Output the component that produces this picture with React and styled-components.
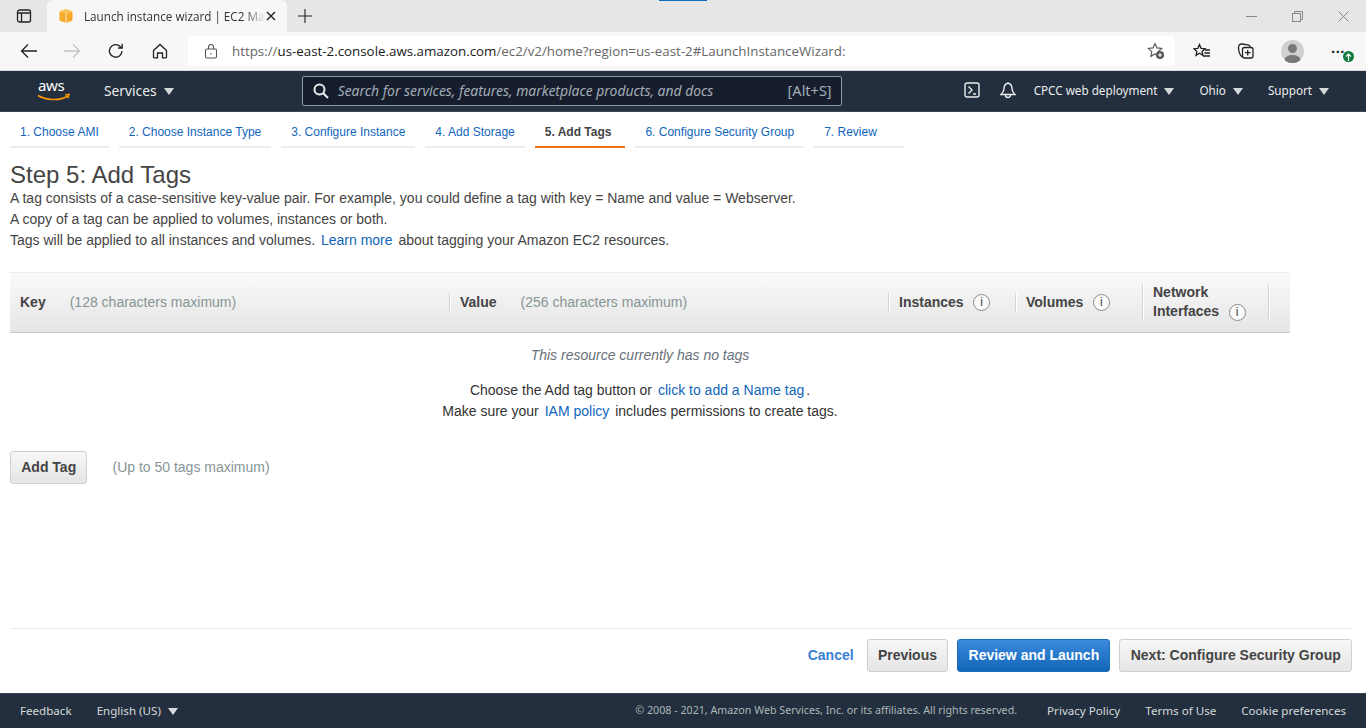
import React from "react";
import styled, { createGlobalStyle } from "styled-components";

const GlobalStyle = createGlobalStyle`
  html, body {
    margin: 0;
    padding: 0;
    background: #fff;
  }
  * {
    box-sizing: border-box;
  }
`;

const Page = styled.div`
  display: flex;
  flex-direction: column;
  width: 1366px;
  height: 728px;
  overflow: hidden;
  font-family: "Liberation Sans", Arial, sans-serif;
  color: #444;
`;

const TabStrip = styled.div`
  display: flex;
  align-items: flex-end;
  height: 32px;
  flex: none;
  background: #e6e6e6;
  position: relative;
`;

const TabToggle = styled.div`
  display: flex;
  align-items: center;
  justify-content: center;
  width: 47px;
  height: 32px;
  svg {
    display: block;
  }
`;

const ActiveTab = styled.div`
  display: flex;
  align-items: center;
  width: 240px;
  height: 32px;
  padding: 0 11px 1px 11px;
  background: #f7f7f7;
  border-radius: 6px 6px 0 0;
`;

const TabTitle = styled.span`
  flex: 1;
  margin-left: 10px;
  white-space: nowrap;
  font-family: "Open Sans", sans-serif;
  font-size: 11.7px;
  color: #333;
  mask-image: linear-gradient(to right, #000 88%, transparent 100%);
`;

const NewTab = styled.div`
  display: flex;
  align-items: center;
  justify-content: center;
  width: 36px;
  height: 32px;
`;

const Progress = styled.div`
  position: absolute;
  top: 0;
  left: 659px;
  width: 48px;
  height: 1px;
  background: #0a6cc4;
`;

const WindowControls = styled.div`
  display: flex;
  align-items: center;
  gap: 35px;
  margin-left: auto;
  height: 32px;
  padding-right: 17px;
`;

const Toolbar = styled.div`
  display: flex;
  align-items: center;
  height: 39px;
  flex: none;
  padding-left: 10px;
  background: #f7f7f7;
  border-bottom: 1px solid #d9d9d9;
`;

const ToolIcon = styled.div`
  display: flex;
  align-items: center;
  justify-content: center;
  flex: none;
  width: ${(p) => p.$w || 44}px;
  height: 30px;
  position: relative;
`;

const AddressBar = styled.div`
  display: flex;
  align-items: center;
  width: 987px;
  height: 30px;
  margin-left: 3px;
  margin-right: 5px;
  padding: 0 10px 0 16px;
  background: #fff;
  border-radius: 4px;
  font-family: "Open Sans", sans-serif;
  font-size: 13.33px;
`;

const Url = styled.span`
  flex: 1;
  margin-left: 14px;
  white-space: nowrap;
  color: #666;
  b {
    font-weight: 400;
    color: #1a1a1a;
  }
`;

const Avatar = styled.div`
  width: 23px;
  height: 23px;
  border-radius: 50%;
  overflow: hidden;
`;

const Dots = styled.span`
  font-family: "Liberation Sans", sans-serif;
  font-size: 15px;
  font-weight: 700;
  letter-spacing: 0.5px;
  color: #222;
  line-height: 1;
  margin-top: -8px;
`;

const UpdateBadge = styled.div`
  position: absolute;
  right: 6px;
  top: 15px;
  display: flex;
  align-items: center;
  justify-content: center;
  width: 11px;
  height: 11px;
  border-radius: 50%;
  background: #0f7b3c;
`;

const ConsoleNav = styled.nav`
  display: flex;
  align-items: center;
  height: 41px;
  flex: none;
  padding-left: 37px;
  background: #232f3e;
  border-bottom: 1px solid #3b4654;
  font-family: "Noto Sans", sans-serif;
  font-size: 13px;
  color: #eaeded;
`;

const NavItem = styled.div`
  display: flex;
  align-items: center;
  gap: ${(p) => p.$gap || 7}px;
  margin-left: ${(p) => p.$ml || 0}px;
  padding-bottom: 2px;
  white-space: nowrap;
  font-size: ${(p) => p.$size || 11.7}px;
`;

const Caret = styled.span`
  display: inline-block;
  width: 0;
  height: 0;
  margin-top: 2px;
  border-left: ${(p) => p.$s || 5}px solid transparent;
  border-right: ${(p) => p.$s || 5}px solid transparent;
  border-top: ${(p) => (p.$s || 5) + 2}px solid #d5dbdb;
`;

const SearchBox = styled.div`
  display: flex;
  align-items: center;
  width: 540px;
  height: 30px;
  margin-left: 128px;
  padding: 0 9px 0 10px;
  background: #161e2d;
  border: 1px solid #8d99a8;
  border-radius: 2px;
`;

const SearchHint = styled.span`
  flex: 1;
  margin-left: 9px;
  padding-bottom: 2px;
  font-style: italic;
  font-size: 13.9px;
  color: #a3acb6;
  white-space: nowrap;
`;

const Shortcut = styled.span`
  padding-bottom: 2px;
  font-size: 14.5px;
  color: #a3acb6;
`;

const Main = styled.main`
  flex: 1;
  display: flex;
  flex-direction: column;
  min-height: 0;
  padding: 0 14px 0 10px;
`;

const WizardTabs = styled.ul`
  display: flex;
  gap: 10px;
  margin: 0;
  padding: 0;
  list-style: none;
  height: 36px;
  flex: none;
`;

const WizardTab = styled.li`
  display: flex;
  align-items: center;
  height: 36px;
  padding: 5px ${(p) => p.$pr || 10}px 0 10px;
  font-size: 12px;
  white-space: nowrap;
  color: ${(p) => (p.$active ? "#444" : "#1166bb")};
  font-weight: ${(p) => (p.$active ? 700 : 400)};
  border-bottom: 2px solid ${(p) => (p.$active ? "#ec7211" : "#eaeded")};
`;

const Title = styled.h1`
  margin: 14px 0 0;
  font-size: 24px;
  line-height: 26px;
  font-weight: 400;
  color: #444;
`;

const Intro = styled.p`
  margin: 0;
  font-size: 14px;
  line-height: 21px;
  color: #444;
`;

const Link = styled.span`
  color: #1166bb;
  margin: 0 2px;
`;

const TableHead = styled.div`
  display: grid;
  grid-template-columns: 439px 439px 127px 127px 126px 22px;
  align-items: center;
  width: 1280px;
  height: 61px;
  margin-top: 21px;
  background: linear-gradient(#fafafa, #e5e5e5);
  border-top: 1px solid #eaeded;
  border-bottom: 1px solid #c8cccc;
  font-size: 14px;
`;

const HeadCell = styled.div`
  display: flex;
  align-items: center;
  height: ${(p) => (p.$tall ? 38 : 19)}px;
  margin-top: ${(p) => (p.$tall ? 0 : -1)}px;
  padding-left: 10px;
  border-left: ${(p) => (p.$first ? "none" : "1px solid #d5d5d5")};
  box-shadow: ${(p) => (p.$first ? "none" : "inset 1px 0 0 #fff")};
  b {
    color: #444;
    white-space: nowrap;
  }
`;

const Hint = styled.span`
  margin-left: ${(p) => p.$ml || 24}px;
  font-size: 14px;
  color: #879596;
  white-space: nowrap;
`;

const TagLimit = styled(Hint)`
  padding-bottom: 2px;
`;

const InfoCircle = styled.span`
  display: inline-flex;
  align-items: center;
  justify-content: center;
  flex: none;
  vertical-align: ${(p) => (p.$inline ? "middle" : "baseline")};
  width: 17px;
  height: 17px;
  margin-left: ${(p) => p.$ml || 9.5}px;
  border: 1px solid #8a8a8a;
  border-radius: 50%;
  background: #fafafa;
  font-size: 12px;
  font-weight: 400;
  line-height: 1;
  color: #444;
`;

const NetworkLabel = styled.div`
  font-weight: 700;
  line-height: 19px;
  color: #444;
  margin-top: -1px;
  white-space: nowrap;
`;

const EmptyState = styled.div`
  width: 1260px;
  margin-top: 12px;
  text-align: center;
  font-size: 14px;
  line-height: 21px;
  color: #333;
`;

const EmptyTitle = styled.div`
  font-style: italic;
  color: #687078;
  margin-bottom: 14px;
`;

const AddRow = styled.div`
  display: flex;
  align-items: center;
  margin-top: 29px;
`;

const Button = styled.button`
  display: block;
  height: 33px;
  padding: 0 10.25px 2px;
  font-family: "Liberation Sans", Arial, sans-serif;
  font-size: 14px;
  font-weight: 700;
  white-space: nowrap;
  border-radius: 3px;
  border: 1px solid ${(p) => (p.$primary ? "#1a6fb8" : "#cfcfcf")};
  color: ${(p) => (p.$primary ? "#fff" : "#444")};
  background: ${(p) =>
    p.$primary
      ? "linear-gradient(#3b8ade, #1266b8)"
      : "linear-gradient(#f7f7f7, #e5e5e5)"};
`;

const Spacer = styled.div`
  flex: 1;
`;

const ActionBar = styled.div`
  display: flex;
  align-items: center;
  justify-content: flex-end;
  gap: 9px;
  height: 65px;
  flex: none;
  padding: 0 0 11px;
  border-top: 1px solid #eaeded;
`;

const CancelLink = styled.span`
  margin-right: 4px;
  padding-bottom: 2px;
  font-size: 14px;
  font-weight: 700;
  color: #3b7fd4;
`;

const Footer = styled.footer`
  display: flex;
  align-items: center;
  height: 35px;
  flex: none;
  padding: 0 20px 2px;
  background: #232f3e;
  border-top: 1px solid #3b4654;
  font-family: "Noto Sans", sans-serif;
  font-size: 11.6px;
  color: #d5dbdb;
`;

const Copyright = styled.span`
  margin-left: auto;
  margin-right: 30px;
  font-size: 10.7px;
  color: #aab7b8;
`;

const FooterLink = styled.span`
  margin-left: ${(p) => p.$ml || 0}px;
  white-space: nowrap;
`;

const wizardSteps = [
  { label: "1. Choose AMI" },
  { label: "2. Choose Instance Type" },
  { label: "3. Configure Instance" },
  { label: "4. Add Storage" },
  { label: "5. Add Tags", active: true, pr: 14 },
  { label: "6. Configure Security Group" },
  { label: "7. Review", pr: 27 },
];

const Stroke = ({ w = 16, h = 16, sw = 1.3, color = "#222", children }) => (
  <svg width={w} height={h} viewBox={`0 0 ${w} ${h}`} fill="none" stroke={color} strokeWidth={sw}>
    {children}
  </svg>
);

const AwsLogo = () => (
  <svg width="34" height="34" viewBox="0 0 34 34" fill="none">
    <text x="1" y="17" fontFamily="Noto Sans, sans-serif" fontSize="15" fill="#fff" letterSpacing="-0.4">
      aws
    </text>
    <path d="M1 21.500C9 26.500 23 27 31 22" stroke="#ff9900" strokeWidth="1.6" />
    <path d="M28 21l4-.6-1 3.800" stroke="#ff9900" strokeWidth="1.4" />
  </svg>
);

const CubeIcon = () => (
  <svg width="16" height="16" viewBox="0 0 16 16">
    <path d="M8 1l6.500 2.500v9L8 15l-6.500-2.500v-9z" fill="#f7a928" />
    <path d="M8 1l6.500 2.500L8 6 1.500 3.500z" fill="#fbc65f" />
    <path d="M8 6v9" stroke="#fff" strokeWidth="0.8" />
  </svg>
);

export default function App() {
  return (
    <Page>
      <GlobalStyle />
      <TabStrip>
        <Progress />
        <TabToggle>
          <Stroke w={16} h={16}>
            <rect x="1.5" y="2" width="13" height="12" rx="2" />
            <path d="M1.5 5h13M5.500 5v9" />
          </Stroke>
        </TabToggle>
        <ActiveTab>
          <CubeIcon />
          <TabTitle>Launch instance wizard | EC2 Ma</TabTitle>
          <Stroke w={10} h={10} sw={1.4}>
            <path d="M1 1l8 8M9 1l-8 8" />
          </Stroke>
        </ActiveTab>
        <NewTab>
          <Stroke w={16} h={16} sw={1.1}>
            <path d="M8 1v14M1 8h14" />
          </Stroke>
        </NewTab>
        <WindowControls>
          <Stroke w={11} h={11} sw={1} color="#888">
            <path d="M0 5.500h11" />
          </Stroke>
          <Stroke w={11} h={11} sw={1} color="#888">
            <rect x="0.5" y="2.500" width="8" height="8" />
            <path d="M2.500 2.500v-2h8v8h-2" />
          </Stroke>
          <Stroke w={11} h={11} sw={1} color="#888">
            <path d="M0.5 0.5l10 10M10.500 0.5l-10 10" />
          </Stroke>
        </WindowControls>
      </TabStrip>

      <Toolbar>
        <ToolIcon $w={37}>
          <Stroke w={18} h={16}>
            <path d="M17 8H1.500M8 1.500L1.500 8 8 14.500" />
          </Stroke>
        </ToolIcon>
        <ToolIcon $w={50}>
          <Stroke w={18} h={16} color="#c4c4c4">
            <path d="M1 8h15.500M10 1.500L16.500 8 10 14.500" />
          </Stroke>
        </ToolIcon>
        <ToolIcon $w={38}>
          <Stroke w={18} h={18}>
            <path d="M15 9a6.300 6.300 0 1 1-2-4.700L15 6" />
            <path d="M15.200 1.800V6h-4.200" />
          </Stroke>
        </ToolIcon>
        <ToolIcon $w={50}>
          <Stroke w={16} h={16}>
            <path d="M1.500 7.500L8 1.500l6.500 6V14a.8.8 0 0 1-.8.8H10.500V10h-5v4.800H2.300a.8.8 0 0 1-.8-.8z" />
          </Stroke>
        </ToolIcon>
        <AddressBar>
          <Stroke w={14} h={16} sw={1.1} color="#555">
            <rect x="1.5" y="6" width="11" height="9" rx="1.5" />
            <path d="M4.500 6V4a2.500 2.500 0 0 1 5 0v2M7 10v1.500" />
          </Stroke>
          <Url>
            https://<b>us-east-2.console.aws.amazon.com</b>/ec2/v2/home?region=us-east-2#LaunchInstanceWizard:
          </Url>
          <Stroke w={18} h={18} sw={1.1} color="#555">
            <path d="M8 1.500l2 4.400 4.700.5-3.500 3.200 1 4.700L8 11.900 3.800 14.300l1-4.700L1.300 6.400 6 5.900z" />
            <circle cx="13" cy="13" r="4" fill="#555" stroke="none" />
            <path d="M13 11v4M11 13h4" stroke="#fff" />
          </Stroke>
        </AddressBar>
        <ToolIcon $w={44}>
          <Stroke w={18} h={16}>
            <path d="M6.500 1.500l1.600 3.800 4 .4-3 2.700.9 4L6.500 10.300 3 12.400l.9-4-3-2.700 4-.4z" />
            <path d="M12 7h5M11.500 10h5.500M10 13h7" />
          </Stroke>
        </ToolIcon>
        <ToolIcon $w={44}>
          <Stroke w={18} h={18}>
            <path d="M5 15C3 13 1.500 9 1.500 5.500 1.500 3 3 1.800 5 2l6 .8c1.500.2 2 1 2.200 2.200" />
            <rect x="5.5" y="5.5" width="10.5" height="10.5" rx="2" />
            <path d="M10.700 8v5.500M8 10.700h5.500" />
          </Stroke>
        </ToolIcon>
        <ToolIcon $w={48}>
          <Avatar>
            <svg width="23" height="23" viewBox="0 0 23 23">
              <rect width="23" height="23" fill="#d2d0ce" />
              <circle cx="11.5" cy="8.5" r="4.5" fill="#7a7876" />
              <ellipse cx="11.5" cy="20" rx="8" ry="5" fill="#7a7876" />
            </svg>
          </Avatar>
        </ToolIcon>
        <ToolIcon $w={44}>
          <Dots>...</Dots>
          <UpdateBadge>
            <svg width="7" height="8" viewBox="0 0 7 8" fill="none" stroke="#fff" strokeWidth="1.2">
              <path d="M3.500 8V1M1 3.500L3.500 1 6 3.500" />
            </svg>
          </UpdateBadge>
        </ToolIcon>
      </Toolbar>

      <ConsoleNav>
        <AwsLogo />
        <NavItem $ml={33} $size={13.8} $gap={7}>
          Services <Caret $s={5.5} />
        </NavItem>
        <SearchBox>
          <svg width="16" height="16" viewBox="0 0 16 16" fill="none" stroke="#eaeded" strokeWidth="2">
            <circle cx="6.5" cy="6.5" r="5" />
            <path d="M10.200 10.200L15 15" />
          </svg>
          <SearchHint>Search for services, features, marketplace products, and docs</SearchHint>
          <Shortcut>[Alt+S]</Shortcut>
        </SearchBox>
        <NavItem $ml={122}>
          <svg width="16" height="16" viewBox="0 0 16 16" fill="none" stroke="#eaeded" strokeWidth="1.4">
            <rect x="1" y="1" width="14" height="14" rx="2" />
            <path d="M4.500 4.500L8 8l-3.500 3.500M9 12h3" />
          </svg>
        </NavItem>
        <NavItem $ml={20}>
          <svg width="16" height="17" viewBox="0 0 16 17" fill="none" stroke="#eaeded" strokeWidth="1.4">
            <path d="M8 1c-3 1-4 3-4 5.500 0 3-1.500 4-3 6h14c-1.500-2-3-3-3-6C12 4 11 2 8 1z" />
            <path d="M5.500 13a2.500 2.500 0 0 0 5 0" />
          </svg>
        </NavItem>
        <NavItem $ml={18}>
          CPCC web deployment <Caret />
        </NavItem>
        <NavItem $ml={25}>
          Ohio <Caret />
        </NavItem>
        <NavItem $ml={25}>
          Support <Caret />
        </NavItem>
      </ConsoleNav>

      <Main>
        <WizardTabs>
          {wizardSteps.map((step) => (
            <WizardTab key={step.label} $active={step.active} $pr={step.pr}>
              {step.label}
            </WizardTab>
          ))}
        </WizardTabs>

        <Title>Step 5: Add Tags</Title>
        <Intro>A tag consists of a case-sensitive key-value pair. For example, you could define a tag with key = Name and value = Webserver.</Intro>
        <Intro>A copy of a tag can be applied to volumes, instances or both.</Intro>
        <Intro>
          Tags will be applied to all instances and volumes. <Link>Learn more</Link> about tagging your Amazon EC2 resources.
        </Intro>

        <TableHead>
          <HeadCell $first>
            <b>Key</b>
            <Hint>(128 characters maximum)</Hint>
          </HeadCell>
          <HeadCell>
            <b>Value</b>
            <Hint>(256 characters maximum)</Hint>
          </HeadCell>
          <HeadCell>
            <b>Instances</b>
            <InfoCircle>i</InfoCircle>
          </HeadCell>
          <HeadCell>
            <b>Volumes</b>
            <InfoCircle>i</InfoCircle>
          </HeadCell>
          <HeadCell $tall>
            <NetworkLabel>
              Network
              <br />
              Interfaces
              <InfoCircle $inline>i</InfoCircle>
            </NetworkLabel>
          </HeadCell>
          <HeadCell $tall />
        </TableHead>

        <EmptyState>
          <EmptyTitle>This resource currently has no tags</EmptyTitle>
          <div>
            Choose the Add tag button or <Link>click to add a Name tag</Link>.
          </div>
          <div>
            Make sure your <Link>IAM policy</Link> includes permissions to create tags.
          </div>
        </EmptyState>

        <AddRow>
          <Button>Add Tag</Button>
          <TagLimit $ml={25}>(Up to 50 tags maximum)</TagLimit>
        </AddRow>

        <Spacer />

        <ActionBar>
          <CancelLink>Cancel</CancelLink>
          <Button>Previous</Button>
          <Button $primary>Review and Launch</Button>
          <Button>Next: Configure Security Group</Button>
        </ActionBar>
      </Main>

      <Footer>
        <FooterLink>Feedback</FooterLink>
        <FooterLink $ml={25}>English (US)</FooterLink>
        <FooterLink $ml={7}>
          <Caret />
        </FooterLink>
        <Copyright>© 2008 - 2021, Amazon Web Services, Inc. or its affiliates. All rights reserved.</Copyright>
        <FooterLink>Privacy Policy</FooterLink>
        <FooterLink $ml={25}>Terms of Use</FooterLink>
        <FooterLink $ml={25}>Cookie preferences</FooterLink>
      </Footer>
    </Page>
  );
}
